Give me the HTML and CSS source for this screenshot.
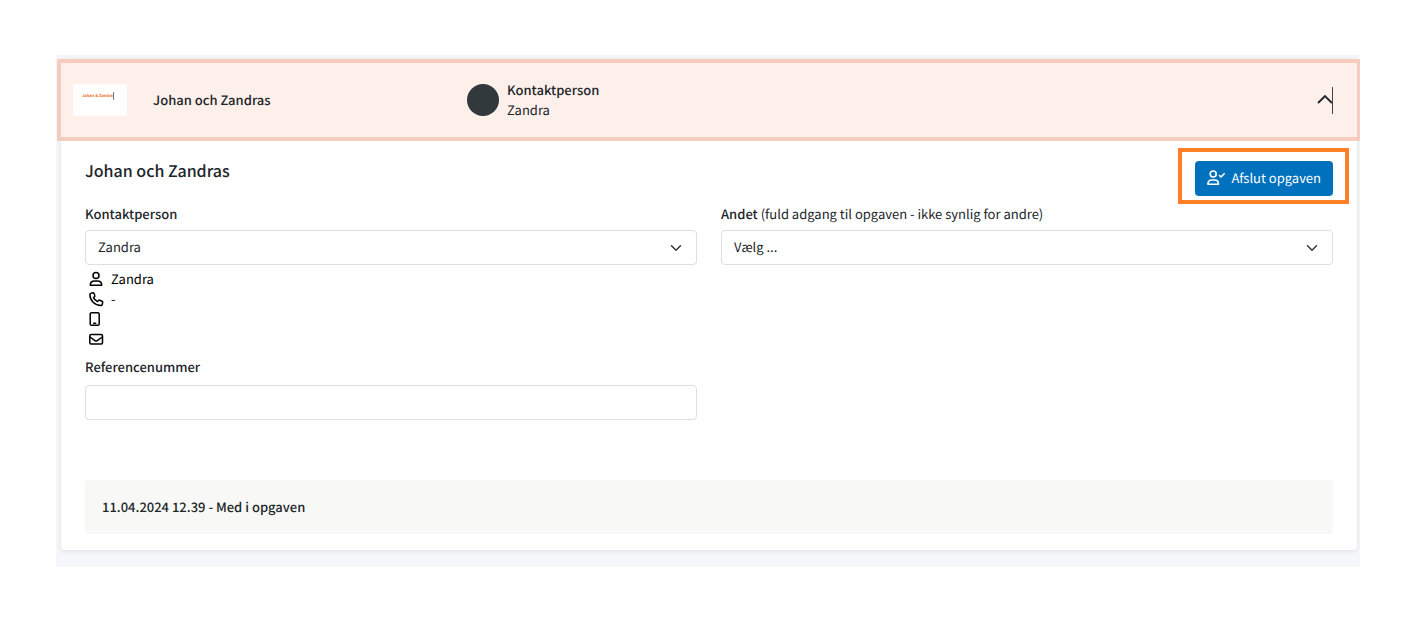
FILE: index.html
```html
<!DOCTYPE html>
<html lang="da">
<head>
<meta charset="utf-8">
<meta name="viewport" content="width=device-width, initial-scale=1">
<title>Johan och Zandras</title>
<link rel="stylesheet" href="styles.css">
</head>
<body>
<main class="panel">
  <article class="card">
    <header class="card-header">
      <div class="company">
        <div class="logo"><span class="logo-text">Johan &amp; Zandra</span></div>
        <span class="strong">Johan och Zandras</span>
      </div>
      <div class="contact">
        <span class="avatar"></span>
        <div>
          <div class="strong">Kontaktperson</div>
          <div>Zandra</div>
        </div>
      </div>
      <button class="toggle" type="button" aria-label="Skjul detaljer" aria-expanded="true">
        <svg width="15" height="12" viewBox="0 0 15 12" fill="none" stroke="currentColor" stroke-width="1.9"><path d="M1 9 8 2l7 7"/></svg>
      </button>
    </header>
    <div class="card-body">
      <div class="title-row">
        <h2 class="title">Johan och Zandras</h2>
        <button class="finish" type="button">
          <svg width="18" height="16" viewBox="0 0 18 16" fill="none" stroke="currentColor" stroke-width="1.6" stroke-linecap="round" stroke-linejoin="round"><circle cx="6.2" cy="4" r="3"/><path d="M.9 14.200c0-2.600 1.700-4.200 4-4.200h2.600c2.300 0 4 1.600 4 4.200Z"/><path d="m12.500 5.500 1.500 1.500 3.200-3.300"/></svg>
          Afslut opgaven
        </button>
      </div>
      <form class="form">
        <div class="column">
          <label class="label strong" for="contact">Kontaktperson</label>
          <select class="field select" id="contact"><option>Zandra</option></select>
          <ul class="details">
            <li><svg class="icon" viewBox="0 0 16 16"><circle cx="8" cy="4.500" r="3"/><path d="M2.300 14.300c0-2.600 1.700-4.300 4.200-4.300h3c2.500 0 4.200 1.700 4.200 4.300Z"/></svg>Zandra</li>
            <li><svg class="icon" viewBox="0 0 16 16"><path d="M4.900 1.800 2.700 2.400c-.5.100-.8.600-.8 1.100C1.900 9.600 6.700 14.600 13 14.600c.5 0 1-.3 1.100-.8l.6-2.300c.1-.5-.1-1-.6-1.200l-2.500-1.100c-.4-.2-.9-.1-1.200.300l-.9 1.100C7.600 9.600 6.300 8.300 5.500 6.600l1-.9c.4-.3.500-.8.3-1.200L5.900 2.300c-.2-.4-.6-.6-1-.5Z"/></svg>-</li>
            <li><svg class="icon" viewBox="0 0 16 16"><rect x="2.200" y="1.700" width="9" height="12.600" rx="1.400"/><path d="M5.700 12.200h2"/></svg></li>
            <li><svg class="icon" viewBox="0 0 16 16"><rect x="1.800" y="3.600" width="12.700" height="9.400" rx="1.200"/><path d="m1.900 6 5.100 3.700c.7.500 1.500.5 2.200 0L14.400 6"/></svg></li>
          </ul>
          <label class="label label-reference strong" for="reference">Referencenummer</label>
          <input class="field" id="reference" type="text">
        </div>
        <div class="column">
          <label class="label" for="other"><span class="strong">Andet</span> (fuld adgang til opgaven - ikke synlig for andre)</label>
          <select class="field select" id="other"><option>Vælg ...</option></select>
        </div>
      </form>
      <p class="event strong">11.04.2024 12.39 - Med i opgaven</p>
    </div>
  </article>
</main>
</body>
</html>
```
FILE: styles.css
```css
* {
  box-sizing: border-box;
}

body {
  margin: 0;
  padding: 55px 51px 55px 56px;
  background: #fff;
  color: #212529;
  font: 13px/20px "Noto Sans CJK SC", "Noto Sans", sans-serif;
  text-rendering: geometricPrecision;
}

button,
input,
select {
  font: inherit;
  color: inherit;
  text-rendering: inherit;
}

.strong {
  font-weight: 500;
}

.panel {
  padding: 8px 3px 17px 5px;
  overflow: hidden;
  background: #f5f7fa;
}

.card {
  border-radius: 4px;
  background: #fff;
  box-shadow: 0 1px 5px rgba(0, 0, 0, 0.1);
}

.card-header {
  display: grid;
  grid-template-columns: 394fr 850fr 28px;
  align-items: center;
  margin: -4px -4px 0;
  padding: 17px 12px;
  border: 4px solid #f5cdbf;
  background: #fdf0eb;
}

.company {
  display: flex;
  align-items: center;
  gap: 26px;
}

.logo {
  width: 54px;
  height: 32px;
  padding: 8px 9px;
  background: #fff;
}

.logo-text {
  display: block;
  width: max-content;
  border-right: 1px solid #777;
  color: #f07030;
  font-size: 4px;
  font-weight: 700;
  line-height: 8px;
}

.contact {
  display: flex;
  align-items: center;
  gap: 8px;
}

.avatar {
  width: 32px;
  height: 32px;
  border-radius: 50%;
  background: #31393d;
}

.toggle {
  display: flex;
  align-items: center;
  justify-content: flex-end;
  justify-self: start;
  width: 16px;
  height: 27px;
  padding: 0;
  border: 0;
  border-right: 1px solid #444;
  background: none;
}

.toggle svg {
  flex: none;
}

.card-body {
  padding: 20px 24px 16px;
}

.title-row {
  display: flex;
  align-items: flex-start;
  justify-content: space-between;
  height: 43px;
}

.title {
  margin: 0;
  font-size: 16px;
  font-weight: 500;
  line-height: 19px;
}

.finish {
  position: relative;
  display: flex;
  align-items: center;
  gap: 6px;
  height: 35px;
  padding: 0 12px 1px;
  border: 0;
  border-radius: 4px;
  background: #0071bc;
  color: #fff;
}

.finish::after {
  content: "";
  position: absolute;
  inset: -13px -16px -8px -17px;
  border: 4px solid #ff7f27;
  pointer-events: none;
}

.form {
  display: grid;
  grid-template-columns: 1fr 1fr;
  gap: 24px;
}

.label {
  display: block;
  margin-bottom: 6px;
}

.label-reference {
  margin-bottom: 8px;
}

.field {
  display: block;
  width: 100%;
  height: 35px;
  padding: 0 12px 1px;
  border: 1px solid #dcdfe6;
  border-radius: 4px;
  background-color: #fff;
}

.select {
  appearance: none;
  background-image: url("data:image/svg+xml,%3Csvg xmlns='http://www.w3.org/2000/svg' viewBox='0 0 16 16'%3E%3Cpath fill='none' stroke='%23343a40' stroke-linecap='round' stroke-linejoin='round' stroke-width='2' d='m2 5 6 6 6-6'/%3E%3C/svg%3E");
  background-position: right 14px center;
  background-repeat: no-repeat;
  background-size: 12px;
}

.details {
  margin: 4px 0 8px;
  padding: 0 0 0 3px;
  color: #000;
  list-style: none;
}

.details li {
  display: flex;
  align-items: center;
  gap: 7px;
  height: 20px;
}

.icon {
  width: 16px;
  height: 16px;
  fill: none;
  stroke: currentColor;
  stroke-width: 1.5;
  stroke-linecap: round;
  stroke-linejoin: round;
}

.event {
  margin: 60px 0 0;
  padding: 17px;
  border-radius: 4px;
  background: #f8f8f6;
}
```
